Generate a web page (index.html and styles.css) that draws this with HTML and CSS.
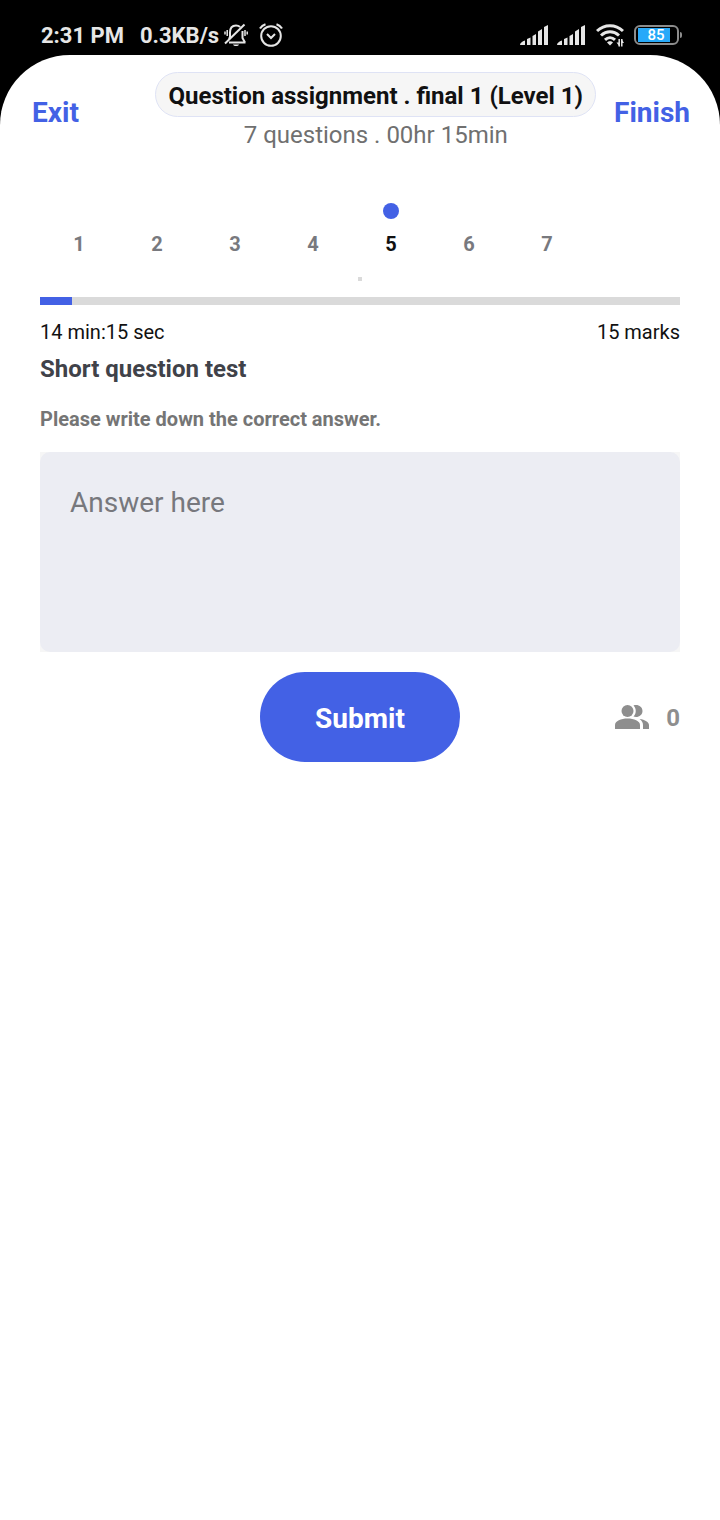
FILE: index.html
```html
<!DOCTYPE html>
<html lang="en">
<head>
<meta charset="utf-8">
<meta name="viewport" content="width=device-width, initial-scale=1">
<title>Question assignment</title>
<link rel="stylesheet" href="styles.css">
</head>
<body>
<div class="status">
  <div class="status-side">
    <span class="clock">2:31 PM</span>
    <span class="speed">0.3KB/s</span>
    <svg class="muted" width="24" height="24" viewBox="0 0 24 24" fill="none" stroke="#e6e6e6" stroke-width="2" aria-hidden="true">
      <path d="M5 19.500H21.500M6 14V9.500C6 5 8.500 2.500 12 2.500C14 2.500 15 3 16.200 4M18.500 8V15L21 19.500M6 14L5 16"/>
      <path d="M1 20.500L20.500 1.500"/>
      <path d="M9 21.500H15C14.500 23 13.500 23 12 23C10.500 23 9.500 23 9 21.500Z" fill="#e6e6e6" stroke="none"/>
      <path d="M3.200 7V13M21 7V13" stroke-width="1.500"/>
      <path d="M1 8.500V11.500M23.200 8.500V11.500" stroke-width="1.500"/>
    </svg>
    <svg class="alarm" width="24" height="24" viewBox="0 0 24 24" fill="none" stroke="#e6e6e6" stroke-width="2" aria-hidden="true">
      <circle cx="12" cy="13" r="9.800"/>
      <path d="M8 11L12 15L16 11"/>
      <path d="M1 5.500C2.300 3.500 4 2 6.500 1.200M23 5.500C21.700 3.500 20 2 17.500 1.200" stroke-width="2.200"/>
    </svg>
  </div>
  <div class="status-side">
    <svg class="signal" width="28" height="20" viewBox="0 0 28 20" fill="#e6e6e6" aria-hidden="true">
      <path d="M0 20C0 18 2 16.500 5 15.500V20ZM7 14L10.500 12.500V20H7ZM12.500 11L16 9V20H12.500ZM18 6.500L22 4V20H18ZM24 2L28 0V20H24Z"/>
    </svg>
    <svg class="signal" width="28" height="20" viewBox="0 0 28 20" fill="#e6e6e6" aria-hidden="true">
      <path d="M0 20C0 18 2 16.500 5 15.500V20ZM7 14L10.500 12.500V20H7ZM12.500 11L16 9V20H12.500ZM18 6.500L22 4V20H18ZM24 2L28 0V20H24Z"/>
    </svg>
    <svg class="wifi" width="28" height="24" viewBox="0 0 28 24" fill="none" stroke="#e6e6e6" stroke-width="3" aria-hidden="true">
      <path d="M1 8C8.500 1 19.500 1 27 8" />
      <path d="M5 12.500C10.500 7.500 17.500 7.500 23 12.500"/>
      <path d="M9 16.800C12 14 16 14 19 16.800"/>
      <path d="M11 19.500C12.500 17.800 15.500 17.800 17 19.500L14 22.500Z" fill="#e6e6e6" stroke="none"/>
      <path d="M23.200 16V23.500M25.800 16V23.500" stroke-width="1.500"/>
      <path d="M20.500 19.500L23.500 23.500V19.500ZM25.500 16L28 20H25.500Z" fill="#e6e6e6" stroke="none"/>
    </svg>
    <span class="battery"><span class="battery-case"><span class="battery-fill">85</span></span><span class="battery-tip"></span></span>
  </div>
</div>
<div class="sheet">
  <header class="top">
    <button class="link" type="button">Exit</button>
    <div class="heading">
      <h1 class="title">Question assignment . final 1 (Level 1)</h1>
      <p class="summary">7 questions . 00hr 15min</p>
    </div>
    <button class="link" type="button">Finish</button>
  </header>
  <main class="content">
    <nav class="steps" aria-label="Questions">
      <button class="step" type="button">1</button>
      <button class="step" type="button">2</button>
      <button class="step" type="button">3</button>
      <button class="step" type="button">4</button>
      <button class="step current" type="button" aria-current="step">5</button>
      <button class="step" type="button">6</button>
      <button class="step" type="button">7</button>
    </nav>
    <div class="speck"></div>
    <div class="track"><div class="progress" style="width: 5%"></div></div>
    <div class="facts"><span>14 min:15 sec</span><span>15 marks</span></div>
    <h2 class="question">Short question test</h2>
    <label class="hint" for="answer">Please write down the correct answer.</label>
    <div class="answer-wrap"><textarea class="answer" id="answer" placeholder="Answer here"></textarea></div>
    <div class="actions">
      <button class="submit" type="button">Submit</button>
      <div class="people">
        <svg width="34" height="24" viewBox="0 0 34 24" fill="#8e8e8e" aria-hidden="true">
          <circle cx="12.500" cy="6" r="6"/>
          <path d="M18.500 .4C23-1 27.500 1.500 27.500 6S23 13 18.500 11.600C21.500 8.500 21.500 3.500 18.500 .4Z"/>
          <path d="M0 24V20C0 16 6 13.500 12.500 13.500S25 16 25 20V24Z"/>
          <path d="M24.500 14C30 14.800 34 17 34 20V24H28V20C28 17.500 26.800 15.500 24.500 14Z"/>
        </svg>
        <span>0</span>
      </div>
    </div>
  </main>
</div>
</body>
</html>
```
FILE: styles.css
```css
* { box-sizing: border-box; }

body {
  margin: 0;
  min-height: 100vh;
  display: flex;
  flex-direction: column;
  background: #000;
  color: #111;
  font-family: Roboto, "Liberation Sans", sans-serif;
}

button {
  border: 0;
  padding: 0;
  background: none;
  font-family: inherit;
  font-weight: 700;
  cursor: pointer;
}

h1, h2, p { margin: 0; }

.status {
  display: flex;
  justify-content: space-between;
  align-items: center;
  height: 55px;
  padding: 15px 38px 0 41px;
  color: #e6e6e6;
  font-size: 22px;
  font-weight: 700;
  line-height: 24px;
}

.status-side { display: flex; align-items: center; }
.clock, .speed { padding-top: 2px; }
.clock { margin-right: 16px; }
.muted { margin-left: 5px; }
.alarm { margin-left: 11px; }
.signal { margin-right: 9px; }
.wifi { margin-left: 2px; margin-right: 10px; }
.battery { display: flex; align-items: center; gap: 1px; }

.battery-case {
  display: flex;
  width: 45px;
  height: 20px;
  padding: 1px 7px 1px 2px;
  border: 2px solid #8c8c8c;
  border-radius: 6px;
}

.battery-fill {
  flex: 1;
  background: #27a9f9;
  color: #fff;
  font-size: 15px;
  font-weight: 500;
  line-height: 14px;
  text-align: center;
  padding-left: 4px;
}

.battery-tip {
  width: 2px;
  height: 6px;
  background: #8c8c8c;
  border-radius: 0 2px 2px 0;
}

.sheet {
  flex: 1;
  background: #fff;
  border-radius: 70px 70px 0 0;
}

.top {
  display: flex;
  align-items: center;
  gap: 18px;
  padding: 17px 30px 0 32px;
}

.heading {
  display: flex;
  flex-direction: column;
  align-items: center;
  margin-left: auto;
}

.title {
  padding: 10px 12px 7px;
  border: 1px solid #dfe3f5;
  border-radius: 23px;
  background: #f6f6f6;
  font-size: 24px;
  font-weight: 700;
  line-height: 26px;
  white-space: nowrap;
}

.summary {
  color: #707070;
  font-size: 24px;
  line-height: 36px;
}

.link {
  color: #4361e5;
  font-size: 28px;
  line-height: 32px;
}

.content { padding: 0 40px; }

.steps {
  display: flex;
  margin-top: 50px;
}

.step {
  display: grid;
  justify-items: center;
  row-gap: 13px;
  width: 78px;
  color: #78797e;
  font-size: 20px;
  line-height: 24px;
}

.step::before {
  content: "";
  width: 16px;
  height: 16px;
  border-radius: 50%;
}

.current { color: #111; }
.current::before { background: #4361e5; }

.speck {
  width: 4px;
  height: 4px;
  margin: 21px auto 16px;
  background: #dadada;
}

.track {
  height: 8px;
  background: #dadada;
}

.progress {
  height: 100%;
  background: #4361e5;
}

.facts {
  display: flex;
  justify-content: space-between;
  margin-top: 15px;
  font-size: 20px;
  line-height: 24px;
}

.question {
  margin-top: 11px;
  color: #404249;
  font-size: 24px;
  font-weight: 700;
  line-height: 28px;
}

.hint {
  display: block;
  margin-top: 24px;
  color: #757575;
  font-size: 20px;
  font-weight: 700;
  line-height: 24px;
}

.answer-wrap {
  margin-top: 21px;
  background: #f6f6f6;
}

.answer {
  display: block;
  width: 100%;
  height: 200px;
  padding: 35px 30px;
  border: 0;
  border-radius: 10px;
  background: #ecedf3;
  color: #111;
  font: 28px/32px Roboto, "Liberation Sans", sans-serif;
  resize: none;
}

.answer::placeholder { color: #77787d; }

.actions {
  display: grid;
  grid-template-columns: 1fr auto 1fr;
  align-items: center;
  margin-top: 20px;
}

.submit {
  grid-column: 2;
  width: 200px;
  height: 90px;
  padding-top: 2px;
  border-radius: 45px;
  background: #4361e5;
  color: #fff;
  font-size: 28px;
}

.people {
  display: flex;
  justify-self: end;
  align-items: center;
  gap: 17px;
  color: #8e8e8e;
  font-size: 24px;
  font-weight: 700;
  line-height: 28px;
}

.people span { padding-top: 2px; }
```
